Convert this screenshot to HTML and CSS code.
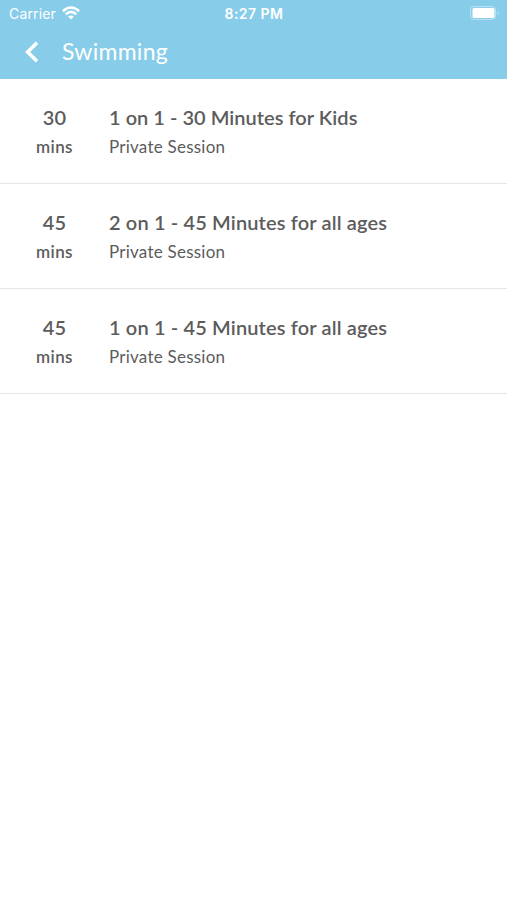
FILE: index.html
```html
<!DOCTYPE html>
<html lang="en">
<head>
<meta charset="utf-8">
<title>Swimming</title>
<link rel="stylesheet" href="styles.css">
</head>
<body>
<header class="header">
  <div class="status">
    <div class="carrier"><span class="carrier-text">Carrier</span>
      <svg class="wifi" width="18" height="14" viewBox="0 0 18 14" fill="none" stroke="#fff" stroke-width="2.6"><path d="M.9 5.2Q9-2.2 17.1 5.2M3.8 8.3Q9 3.6 14.2 8.3"/><path d="M6.1 10.6Q9 8.2 11.9 10.6L9 13.5Z" fill="#fff" stroke="none"/></svg>
    </div>
    <span class="clock">8:27 PM</span>
    <svg class="battery" width="30" height="14" viewBox="0 0 30 14"><rect x=".5" y=".5" width="25" height="13" rx="3.5" fill="none" stroke="#fff" stroke-opacity=".4"/><rect x="2.5" y="2" width="22" height="10" rx="1.5" fill="#fff"/><path d="M27.5 4.5q2 2.5 0 5z" fill="#fff" opacity=".5"/></svg>
  </div>
  <div class="nav">
    <svg class="back" width="14" height="22" viewBox="0 0 14 22" fill="none" stroke="#fff" stroke-width="3.6"><path d="M12 1.7L2.6 11L12 20.3"/></svg>
    <span class="title">Swimming</span>
  </div>
</header>
<main>
  <section class="row">
    <div class="duration"><span class="number">30</span><span class="mins">mins</span></div>
    <div class="details"><span class="name name-short">1 on 1 - 30 Minutes for Kids</span><span class="kind">Private Session</span></div>
  </section>
  <section class="row">
    <div class="duration"><span class="number">45</span><span class="mins">mins</span></div>
    <div class="details"><span class="name">2 on 1 - 45 Minutes for all ages</span><span class="kind">Private Session</span></div>
  </section>
  <section class="row">
    <div class="duration"><span class="number">45</span><span class="mins">mins</span></div>
    <div class="details"><span class="name">1 on 1 - 45 Minutes for all ages</span><span class="kind">Private Session</span></div>
  </section>
</main>
</body>
</html>
```
FILE: styles.css
```css
* { box-sizing: border-box; }
body { margin: 0; background: #fff; color: #5c5c5c; font-family: Lato, sans-serif; white-space: nowrap; }
svg { display: block; flex: none; }
.header { height: 79px; background: #87cdea; color: #fff; }
.status { height: 28px; padding: 4px 7px 0 9px; display: grid; grid-template-columns: 1fr 60px 1fr; align-items: start; font: 14px/20px Inter, sans-serif; }
.carrier { display: flex; gap: 5px; }
.carrier-text { width: 48px; letter-spacing: .15px; }
.wifi { margin-top: 2px; }
.clock { font-weight: 600; letter-spacing: .45px; }
.battery { justify-self: end; margin-top: 2px; }
.nav { height: 51px; display: flex; padding: 8px 0 0 25px; }
.back { margin-top: 5px; }
.title { margin-left: 23px; font-size: 23px; line-height: 30px; letter-spacing: .27px; }
.row { height: 105px; display: flex; padding-top: 25px; border-bottom: 1px solid #e5e5e5; }
.duration { width: 109px; display: flex; flex-direction: column; align-items: center; gap: 5px; }
.number, .name { font-size: 20px; line-height: 27px; font-weight: 600; letter-spacing: .14px; }
.name-short { letter-spacing: .03px; }
.mins, .kind { font-size: 17px; line-height: 22px; letter-spacing: .24px; }
.mins { font-weight: 600; letter-spacing: .4px; }
.details { display: flex; flex-direction: column; gap: 5px; }
```
